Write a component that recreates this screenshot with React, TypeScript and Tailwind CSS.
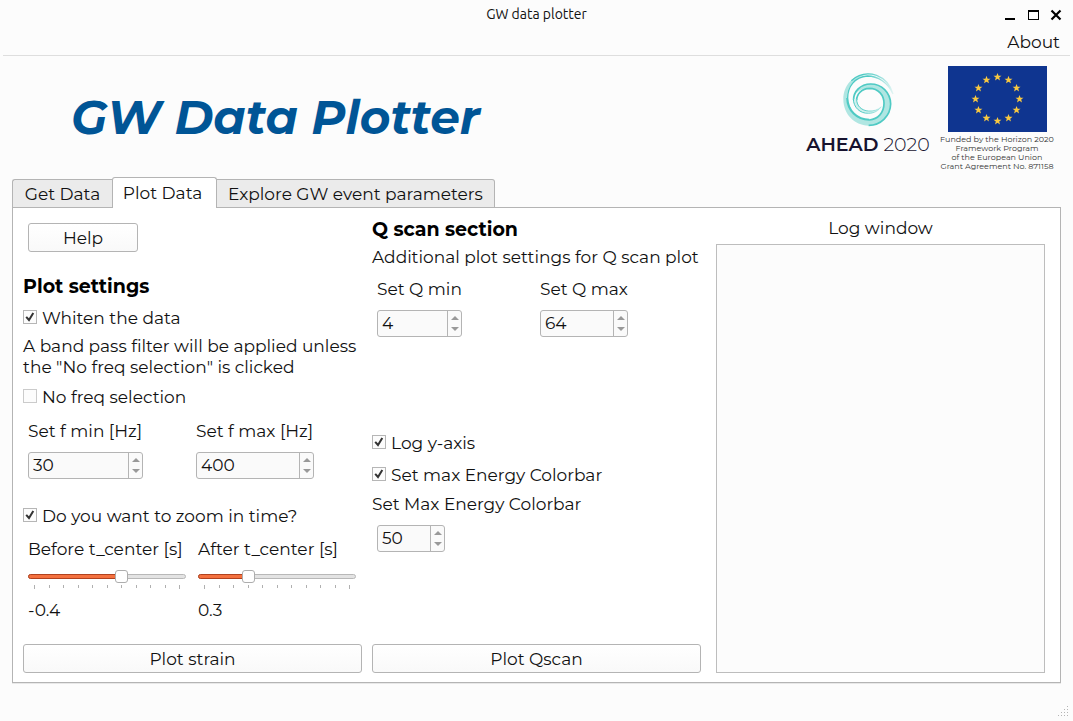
import { useId, useState } from "react";

const TICKS = Array.from({ length: 11 }, (_, i) => i);

function AheadMark() {
  return (
    <svg viewBox="0 0 180 186" className="h-[62px] w-[60px]" aria-hidden="true">
      <defs>
        <linearGradient id="fadeOuter" x1="0" y1="0" x2="1" y2="0">
          <stop offset="0.45" stopColor="#4fcac4" />
          <stop offset="1" stopColor="#4fcac4" stopOpacity="0.15" />
        </linearGradient>
        <linearGradient id="fadeInner" x1="0" y1="0" x2="1" y2="0">
          <stop offset="0.3" stopColor="#4fcac4" />
          <stop offset="1" stopColor="#4fcac4" stopOpacity="0.2" />
        </linearGradient>
      </defs>
      <path
        d="M86 19C46 20 16 52 16 94C16 138 48 172 92 173C130 173 158 144 159 108C158 72 132 47 98 47C66 47 45 70 46 96C48 76 66 59 94 59C122 60 138 82 138 106C137 136 118 156 94 156C56 156 28 128 27 90C27 54 52 28 86 19Z"
        fill="#b0e6e2"
      />
      <path
        d="M40 38C62 18 90 14 116 22C142 32 158 52 165 78C150 44 120 24 88 24C50 27 29 56 29 90C30 126 57 154 94 154"
        fill="none"
        stroke="url(#fadeOuter)"
        strokeWidth="4"
      />
      <path
        d="M27 90C28 128 56 156 94 156C120 154 138 134 138 106C138 82 122 61 94 61C71 62 56 78 56 96"
        fill="none"
        stroke="#4fcac4"
        strokeWidth="5"
      />
      <path
        d="M47 96C46 71 67 48 98 48C131 48 157 73 158 108C157 143 129 172 92 172"
        fill="none"
        stroke="#4fcac4"
        strokeWidth="5"
      />
      <path
        d="M46 92C46 118 66 137 92 136C108 136 122 128 130 116C120 126 106 130 92 129C71 128 56 114 56 94"
        fill="#cdf0ed"
        stroke="url(#fadeInner)"
        strokeWidth="3"
      />
    </svg>
  );
}

function EuFlag() {
  return (
    <svg viewBox="0 0 99 66" className="h-[66px] w-[99px]" role="img" aria-label="European Union">
      <rect width="99" height="66" fill="#0f3590" />
      {Array.from({ length: 12 }, (_, i) => {
        const a = (i * Math.PI) / 6;
        return (
          <polygon
            key={i}
            transform={`translate(${49.5 + 22 * Math.sin(a)} ${33 - 22 * Math.cos(a)})`}
            points="0,-4.1 1.1,-1.3 4,-1.3 1.7,0.6 2.5,3.4 0,1.8 -2.5,3.4 -1.7,0.6 -4,-1.3 -1.1,-1.3"
            fill="#f8c840"
          />
        );
      })}
    </svg>
  );
}

function Check({ label, initial, className = "" }: { label: string; initial: boolean; className?: string }) {
  const [on, setOn] = useState(initial);
  return (
    <label className={`flex items-center gap-[5px] ${className}`}>
      <span className="grid pb-1">
        <input
          type="checkbox"
          checked={on}
          onChange={(e) => setOn(e.target.checked)}
          className={`col-start-1 row-start-1 size-[14px] appearance-none border bg-[#fcfcfc] ${on ? "border-[#b6b6b6]" : "border-[#cbcbcb]"}`}
        />
        {on && (
          <svg viewBox="0 0 14 14" className="pointer-events-none col-start-1 row-start-1 size-[14px]" aria-hidden="true">
            <path d="M3.2 6.8L6 10L10.3 3" fill="none" stroke="#333" strokeWidth="2" />
          </svg>
        )}
      </span>
      {label}
    </label>
  );
}

function Spin({ label, initial, width, indent = "" }: { label: string; initial: number; width: string; indent?: string }) {
  const id = useId();
  const [value, setValue] = useState(String(initial));
  const step = (d: number) => setValue(String(Number(value) + d));
  return (
    <div className="flex flex-col items-start gap-[10px]">
      <label htmlFor={id} className="whitespace-nowrap">{label}</label>
      <div className={`flex h-[27px] overflow-hidden rounded-[3px] border border-[#b4b4b4] bg-[#fafafa] ${width} ${indent}`}>
        <input
          id={id}
          inputMode="numeric"
          value={value}
          onChange={(e) => setValue(e.target.value)}
          className="w-0 min-w-0 flex-1 bg-transparent pl-1 outline-none"
        />
        <div className="flex w-[14px] flex-col border-l border-[#b4b4b4]">
          <button type="button" aria-label={`Increase ${label}`} onClick={() => step(1)} className="flex flex-1 items-end justify-center pb-[3px]">
            <svg viewBox="0 0 8 4" className="h-1 w-2" aria-hidden="true"><path d="M0 4L4 0L8 4Z" fill="#999" /></svg>
          </button>
          <button type="button" aria-label={`Decrease ${label}`} onClick={() => step(-1)} className="flex flex-1 items-start justify-center pt-1">
            <svg viewBox="0 0 8 4" className="h-1 w-2" aria-hidden="true"><path d="M0 0L4 4L8 0Z" fill="#999" /></svg>
          </button>
        </div>
      </div>
    </div>
  );
}

function TimeSlider({ label, initial, sign }: { label: string; initial: number; sign: 1 | -1 }) {
  const id = useId();
  const [value, setValue] = useState(initial);
  const pct = sign === 1 ? value * 100 : (1 + value) * 100;
  return (
    <div className="flex min-w-0 flex-col">
      <label htmlFor={id} className="whitespace-nowrap">{label}</label>
      <div className="mt-[10px] grid items-center">
        <div className="col-start-1 row-start-1 h-[5px] overflow-hidden rounded-sm border border-[#b8b8b8] bg-[#e3e3e3]" />
        <div
          className="col-start-1 row-start-1 h-[5px] rounded-sm border border-[#b1421f] bg-[#f4713f]"
          style={{ width: `${pct}%` }}
        />
        <input
          id={id}
          type="range"
          min={sign === 1 ? 0 : -1}
          max={sign === 1 ? 1 : 0}
          step={0.1}
          value={value}
          onChange={(e) => setValue(Number(e.target.value))}
          className="col-start-1 row-start-1 h-[13px] w-full appearance-none bg-transparent [&::-webkit-slider-thumb]:h-[13px] [&::-webkit-slider-thumb]:w-[13px] [&::-webkit-slider-thumb]:appearance-none [&::-webkit-slider-thumb]:rounded-[3px] [&::-webkit-slider-thumb]:border [&::-webkit-slider-thumb]:border-[#adadad] [&::-webkit-slider-thumb]:bg-white"
        />
      </div>
      <div className="mt-0.5 flex justify-between px-[6px]">
        {TICKS.map((t) => (
          <span key={t} className={`w-px bg-[#b0b0b0] ${t % 10 === 0 ? "h-1" : "h-[3px]"}`} />
        ))}
      </div>
      <output htmlFor={id} className="mt-[11px]">{value}</output>
    </div>
  );
}

const actionButton =
  "h-[29px] rounded-[3px] border border-[#b4b4b4] bg-linear-to-b from-white to-[#f9f9f9] pt-0.5 text-center";

export default function App() {
  return (
    <div className="flex min-h-screen flex-col bg-[#fcfcfc] font-['Montserrat','Inter',sans-serif] text-[17px] leading-[21px] text-[#111]">
      <div className="grid h-[30px] grid-cols-[1fr_auto_1fr] items-center font-['Ubuntu','Open_Sans',sans-serif] text-sm">
        <span />
        <span className="pb-0.5">GW data plotter</span>
        <div className="flex items-center justify-end gap-[11px] pr-[11px]">
          <button type="button" aria-label="Minimize">
            <svg viewBox="0 0 12 12" className="size-3"><path d="M1 10H11" stroke="#000" strokeWidth="2" /></svg>
          </button>
          <button type="button" aria-label="Maximize">
            <svg viewBox="0 0 12 12" className="size-3"><path d="M1 1H12V11H1ZM2 3V10H11V3Z" fill="#000" fillRule="evenodd" /></svg>
          </button>
          <button type="button" aria-label="Close">
            <svg viewBox="0 0 12 12" className="size-3"><path d="M1.5 1.5L10.5 10.5M10.5 1.5L1.5 10.5" stroke="#000" strokeWidth="2.2" /></svg>
          </button>
        </div>
      </div>
      <nav className="mx-[3px] flex h-[26px] justify-end border-b border-[#dedede] pr-[10px]">
        <button type="button" className="self-start pt-0.5">About</button>
      </nav>

      <header className="flex h-[121px] items-start justify-between pr-[22px] pl-[71px]">
        <h1 className="mt-[33px] text-[47px] leading-[58px] font-bold whitespace-nowrap text-[#005596] italic">GW Data Plotter</h1>
        <div className="flex gap-3">
          <div className="flex w-[126px] flex-col items-center pt-3">
            <AheadMark />
            <div className="mt-1 text-[19px] leading-[22px] whitespace-nowrap text-[#17132f]">
              <span className="font-semibold">AHEAD</span> <span className="font-light">2020</span>
            </div>
          </div>
          <div className="flex w-[108px] flex-col items-center pt-[10px] text-center">
            <EuFlag />
            <p className="mt-[3px] text-[8px] leading-[9px] whitespace-nowrap text-[#333]">
              Funded by the Horizon 2020
              <br />
              Framework Program
              <br />
              of the European Union
              <br />
              Grant Agreement No. 871158
            </p>
          </div>
        </div>
      </header>

      <div role="tablist" className="z-10 mx-3 -mb-px flex items-end">
        <button type="button" role="tab" aria-selected="false" className="h-[29px] w-[100px] rounded-tl-[3px] border border-r-0 border-[#b4b4b4] bg-[#ebebeb] pt-0.5 whitespace-nowrap">Get Data</button>
        <button type="button" role="tab" aria-selected="true" className="h-[31px] w-[105px] rounded-t-[3px] border border-b-0 border-[#b4b4b4] bg-white pr-1 whitespace-nowrap">Plot Data</button>
        <button type="button" role="tab" aria-selected="false" className="h-[29px] w-[278px] rounded-tr-[3px] border border-l-0 border-[#b4b4b4] bg-[#ebebeb] pt-0.5 whitespace-nowrap">Explore GW event parameters</button>
      </div>

      <main className="mx-3 flex flex-1 border border-[#b4b4b4] bg-white pr-[15px] pb-[9px] pl-[10px] shadow-[0_1px_0_#e8e8e8]">
        <section className="flex flex-[339_1_0] flex-col items-stretch">
          <button type="button" className={`${actionButton} mt-[15px] ml-[5px] w-[110px]`}>Help</button>
          <h2 className="mt-[23px] text-[19px] leading-6 font-bold text-black">Plot settings</h2>
          <Check label="Whiten the data" initial={true} className="mt-[9px]" />
          <p className="mt-[7px] whitespace-nowrap">
            A band pass filter will be applied unless
            <br />
            the "No freq selection" is clicked
          </p>
          <Check label="No freq selection" initial={false} className="mt-[9px]" />
          <div className="mt-[13px] grid grid-cols-2 gap-2 pr-[6px] pl-[5px]">
            <Spin label="Set f min [Hz]" initial={30} width="w-[115px]" />
            <Spin label="Set f max [Hz]" initial={400} width="w-[118px]" />
          </div>
          <Check label="Do you want to zoom in time?" initial={true} className="mt-[27px]" />
          <div className="mt-3 grid grid-cols-2 gap-3 pr-[6px] pl-[5px]">
            <TimeSlider label="Before t_center [s]" initial={-0.4} sign={-1} />
            <TimeSlider label="After t_center [s]" initial={0.3} sign={1} />
          </div>
          <button type="button" className={`${actionButton} mt-auto`}>Plot strain</button>
        </section>

        <section className="ml-[10px] flex flex-[329_1_0] flex-col items-stretch">
          <h2 className="mt-[10px] text-[19px] leading-6 font-bold text-black">Q scan section</h2>
          <p className="mt-[5px] whitespace-nowrap">Additional plot settings for Q scan plot</p>
          <div className="mt-[11px] grid grid-cols-2 gap-0.5 pl-[5px]">
            <Spin label="Set Q min" initial={4} width="w-[85px]" />
            <Spin label="Set Q max" initial={64} width="w-[88px]" />
          </div>
          <Check label="Log y-axis" initial={true} className="mt-24" />
          <Check label="Set max Energy Colorbar" initial={true} className="mt-[11px] mb-2" />
          <Spin label="Set Max Energy Colorbar" initial={50} width="w-[68px]" indent="ml-[5px]" />
          <button type="button" className={`${actionButton} mt-auto`}>Plot Qscan</button>
        </section>

        <section className="ml-[15px] flex flex-[329_1_0] flex-col">
          <label htmlFor="log" className="mt-[10px] text-center">Log window</label>
          <textarea id="log" readOnly className="mt-[5px] flex-1 resize-none border border-[#bdbdbd] bg-[#fcfcfc] outline-none" />
        </section>
      </main>

      <footer className="flex h-[38px] items-end justify-end pr-1 pb-1">
        <svg viewBox="0 0 12 12" className="size-3" aria-hidden="true">
          {[[10, 1], [7, 4], [10, 4], [4, 7], [7, 7], [10, 7], [1, 10], [4, 10], [7, 10], [10, 10]].map(([x, y]) => (
            <rect key={`${x}-${y}`} x={x} y={y} width="1" height="1" fill="#b5b5b5" />
          ))}
        </svg>
      </footer>
    </div>
  );
}
